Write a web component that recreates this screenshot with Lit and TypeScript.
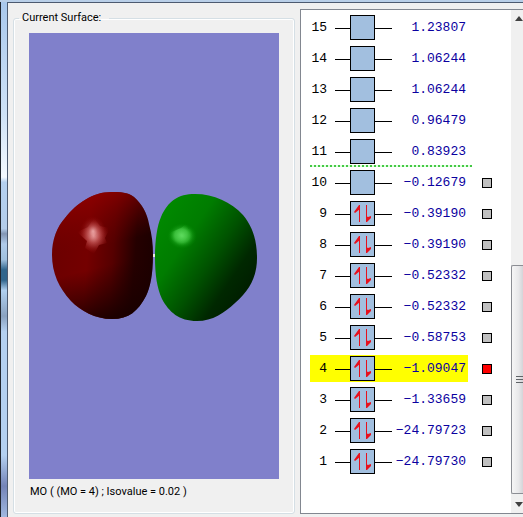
import { LitElement, html, css, svg, nothing } from "lit";
import { customElement, property, state } from "lit/decorators.js";
import { classMap } from "lit/directives/class-map.js";

interface Orbital {
  n: number;
  energy: string;
  filled: boolean;
  selectable: boolean;
}

const energies = [
  "1.23807", "1.06244", "1.06244", "0.96479", "0.83923",
  "−0.12679", "−0.39190", "−0.39190", "−0.52332", "−0.52332",
  "−0.58753", "−1.09047", "−1.33659", "−24.79723", "−24.79730",
];

const orbitals: Orbital[] = energies.map((energy, i) => ({
  n: 15 - i,
  energy,
  filled: 15 - i < 10,
  selectable: 15 - i <= 10,
}));

@customElement("orbital-box")
class OrbitalBox extends LitElement {
  @property({ type: Boolean }) filled = false;

  static styles = css`
    :host { display: block; height: 25px; }
    svg { display: block; }
  `;

  render() {
    return html`<svg width="57" height="25" viewBox="0 0 57 25" aria-hidden="true">
      <path d="M0 13.5H57" stroke="#000" />
      <rect x="15.5" y="0.5" width="24" height="24" fill="#a2bfdf" stroke="#000" />
      ${this.filled
        ? svg`<path d="M24.5 21V4M31.5 4V20" stroke="#e8101c" fill="none" />
            <path d="M25 4L24 4L19 11L20 12L25 8Z M31 21V15L33 16L36 15V17L32 21Z" fill="#e8101c" />`
        : nothing}
    </svg>`;
  }
}

@customElement("orbital-list")
class OrbitalList extends LitElement {
  @property({ attribute: false }) items: Orbital[] = [];
  @state() private selected = 4;

  static styles = css`
    :host { display: block; }
    ul { list-style: none; margin: 0; padding: 4px 0 0 9px; display: grid; gap: 4px; }
    li { display: flex; align-items: center; height: 27px; position: relative; }
    label {
      display: grid;
      grid-template-columns: 17px 57px 1fr;
      column-gap: 8px;
      align-items: center;
      width: 158px;
      height: 27px;
      padding-right: 2px;
      box-sizing: border-box;
      font: 13px/27px "Liberation Mono", monospace;
      color: #000;
    }
    .selected label { background: #ff0; }
    .n { text-align: right; }
    .energy { text-align: right; color: #0a00a0; margin-left: -8px; white-space: nowrap; }
    input {
      appearance: none;
      width: 10px;
      height: 10px;
      margin: 0 0 0 14px;
      border: 1px solid #000;
      background: #c0c0c0;
    }
    input:checked { background: #f00; }
    .lumo::after {
      content: "";
      position: absolute;
      left: 0;
      top: 27px;
      width: 162px;
      height: 2px;
      background: repeating-linear-gradient(90deg, #45c845 0 2px, #e0ffe0 2px 4px);
    }
  `;

  render() {
    return html`<ul>
      ${this.items.map(
        (o) => html`<li class=${classMap({ selected: o.n === this.selected, lumo: o.n === 11 })}>
          <label for="mo${o.n}">
            <span class="n">${o.n}</span>
            <orbital-box ?filled=${o.filled}></orbital-box>
            <span class="energy">${o.energy}</span>
          </label>
          ${o.selectable
            ? html`<input type="radio" name="mo" id="mo${o.n}"
                .checked=${o.n === this.selected}
                @change=${() => (this.selected = o.n)} />`
            : nothing}
        </li>`
      )}
    </ul>`;
  }
}

@customElement("surface-view")
class SurfaceView extends LitElement {
  static styles = css`
    :host { display: flex; align-items: center; justify-content: center; background: #8080cb; }
    svg { display: block; }
  `;

  render() {
    return html`<svg width="208" height="132" viewBox="-1 -1 208 132" role="img" aria-label="Molecular orbital">
      <defs>
        <linearGradient id="red" x1="0" y1="0.45" x2="1" y2="0.55">
          <stop offset="0" stop-color="#6c0000" />
          <stop offset="0.35" stop-color="#740000" />
          <stop offset="0.6" stop-color="#560000" />
          <stop offset="0.82" stop-color="#250000" />
          <stop offset="1" stop-color="#1c0000" />
        </linearGradient>
        <linearGradient id="redTop" x1="0.3" y1="0" x2="0.5" y2="1">
          <stop offset="0" stop-color="#980000" stop-opacity="0.8" />
          <stop offset="0.45" stop-color="#700000" stop-opacity="0" />
          <stop offset="0.6" stop-color="#200000" stop-opacity="0" />
          <stop offset="1" stop-color="#180000" stop-opacity="0.9" />
        </linearGradient>
        <linearGradient id="green" x1="0.1" y1="0.15" x2="0.85" y2="0.78">
          <stop offset="0" stop-color="#008800" />
          <stop offset="0.3" stop-color="#007c00" />
          <stop offset="0.6" stop-color="#005200" />
          <stop offset="0.85" stop-color="#002800" />
          <stop offset="1" stop-color="#002000" />
        </linearGradient>
        <radialGradient id="redShine">
          <stop offset="0" stop-color="#ffc8c8" />
          <stop offset="0.35" stop-color="#c86060" stop-opacity="0.85" />
          <stop offset="1" stop-color="#900000" stop-opacity="0" />
        </radialGradient>
        <radialGradient id="greenShine">
          <stop offset="0" stop-color="#60dc60" />
          <stop offset="0.5" stop-color="#40c440" stop-opacity="0.8" />
          <stop offset="1" stop-color="#008c00" stop-opacity="0" />
        </radialGradient>
        <path id="lobe" d="M1 64C1 48 6 36 14 27C26 12 42 1 60 1C70 1 76 1 83 6C91 13 96 22 98 33C101 44 102 53 102 64C102 84 99 97 95 105C87 120 78 128 61 128C44 128 30 120 20 110C8 97 1 82 1 64Z" />
      </defs>
      <rect x="98" y="63" width="8" height="3" fill="#e8e8e0" />
      <use href="#lobe" fill="url(#red)" />
      <use href="#lobe" fill="url(#redTop)" />
      <path d="M104 66C104 50 106 35 110 26C117 10 127 3 144 3C163 3 180 11 192 24C202 36 206 50 206 67C206 85 199 99 184 112C173 122 162 130 146 130C128 130 118 121 111 108C106 97 104 84 104 66Z" fill="url(#green)" />
      <path d="M26 41L37 36L43 27L49 35L59 37L54 47L56 52L48 54L43 63L34 57L36 50Z" fill="url(#redShine)" />
      <ellipse cx="42" cy="40" rx="13" ry="15" fill="url(#redShine)" opacity="0.6" />
      <path d="M118 42L130 37L136 32L137 38L141 37L142 46L136 55L128 54L120 48Z" fill="url(#greenShine)" />
      <ellipse cx="131" cy="45" rx="15" ry="13" fill="url(#greenShine)" opacity="0.8" />
    </svg>`;
  }
}

@customElement("app-root")
class AppRoot extends LitElement {
  static styles = css`
    :host {
      display: grid;
      grid-template-columns: 7px 1fr;
      min-height: 100vh;
      box-sizing: border-box;
      padding-top: 2px;
      overflow: hidden;
      background: #b9cfe8;
      font: 11px/14px Roboto, "Liberation Sans", Arial, sans-serif;
      color: #000;
    }
    .edge {
      border-left: 1px solid #20242c;
      background: linear-gradient(#a9c8ec 0, #cfe2f6 22%, #f4f9ff 34%, #b4d0f0 35%, #b4cdea 44%, #8396b4 45%, #b0cbea 47%, #a0c0de 50%, #30658c 52%, #30658c 54%, #b0d0f0 56%, #8aa2c0 61%, #b4d0f0 64%, #b4d0f0 88%, #7484b8 94%, #a0b8e0);
    }
    main {
      display: grid;
      grid-template-columns: minmax(0, 282fr) minmax(0, 223fr);
      gap: 5px;
      padding: 6px 0 3px 5px;
      border: solid #4c5a70;
      border-width: 1px 0 0 1px;
      background: #f0f0f0;
    }
    fieldset {
      min-width: 0;
      margin: 2px 0 0;
      padding: 8px 15px 10px 15px;
      border: 1px solid #d5dfe5;
      border-radius: 3px;
      box-shadow: inset 0 0 0 1px #fff;
    }
    legend { margin-left: -10px; padding: 0 8px 0 3px; }
    surface-view { height: 446px; }
    p { margin: 6px 0 0 1px; }
    .panel {
      display: flex;
      border: solid #828790;
      border-width: 1px 0 1px 1px;
      background: #fff;
      overflow: hidden;
    }
    orbital-list { flex: 1; }
    .scroll {
      flex: none;
      width: 12px;
      display: flex;
      flex-direction: column;
      background: #f0f0f0;
    }
    .scroll svg { display: block; }
    .track { flex: 1; display: flex; flex-direction: column; justify-content: flex-end; }
    .thumb {
      height: 49%;
      box-sizing: border-box;
      border: 1px solid #8c8e94;
      border-right: 0;
      border-radius: 2px 0 0 2px;
      background: linear-gradient(90deg, #f6f6f6, #e8e8ea 60%, #d4d4d8);
      display: flex;
      align-items: center;
    }
  `;

  render() {
    return html`
      <div class="edge"></div>
      <main>
        <fieldset>
          <legend>Current Surface:</legend>
          <surface-view></surface-view>
          <p>MO ( (MO = 4) ; Isovalue = 0.02 )</p>
        </fieldset>
        <div class="panel">
          <orbital-list .items=${orbitals}></orbital-list>
          <div class="scroll">
            <svg width="12" height="17"><path d="M4 11L8 6L12 11Z" fill="#404040" /></svg>
            <div class="track">
              <div class="thumb">
                <svg width="11" height="10"><path d="M4 1.5H11M4 4.5H11M4 7.5H11" stroke="#606468" /></svg>
              </div>
            </div>
            <svg width="12" height="19"><path d="M4 8H12L8 13Z" fill="#404040" /></svg>
          </div>
        </div>
      </main>
    `;
  }
}
